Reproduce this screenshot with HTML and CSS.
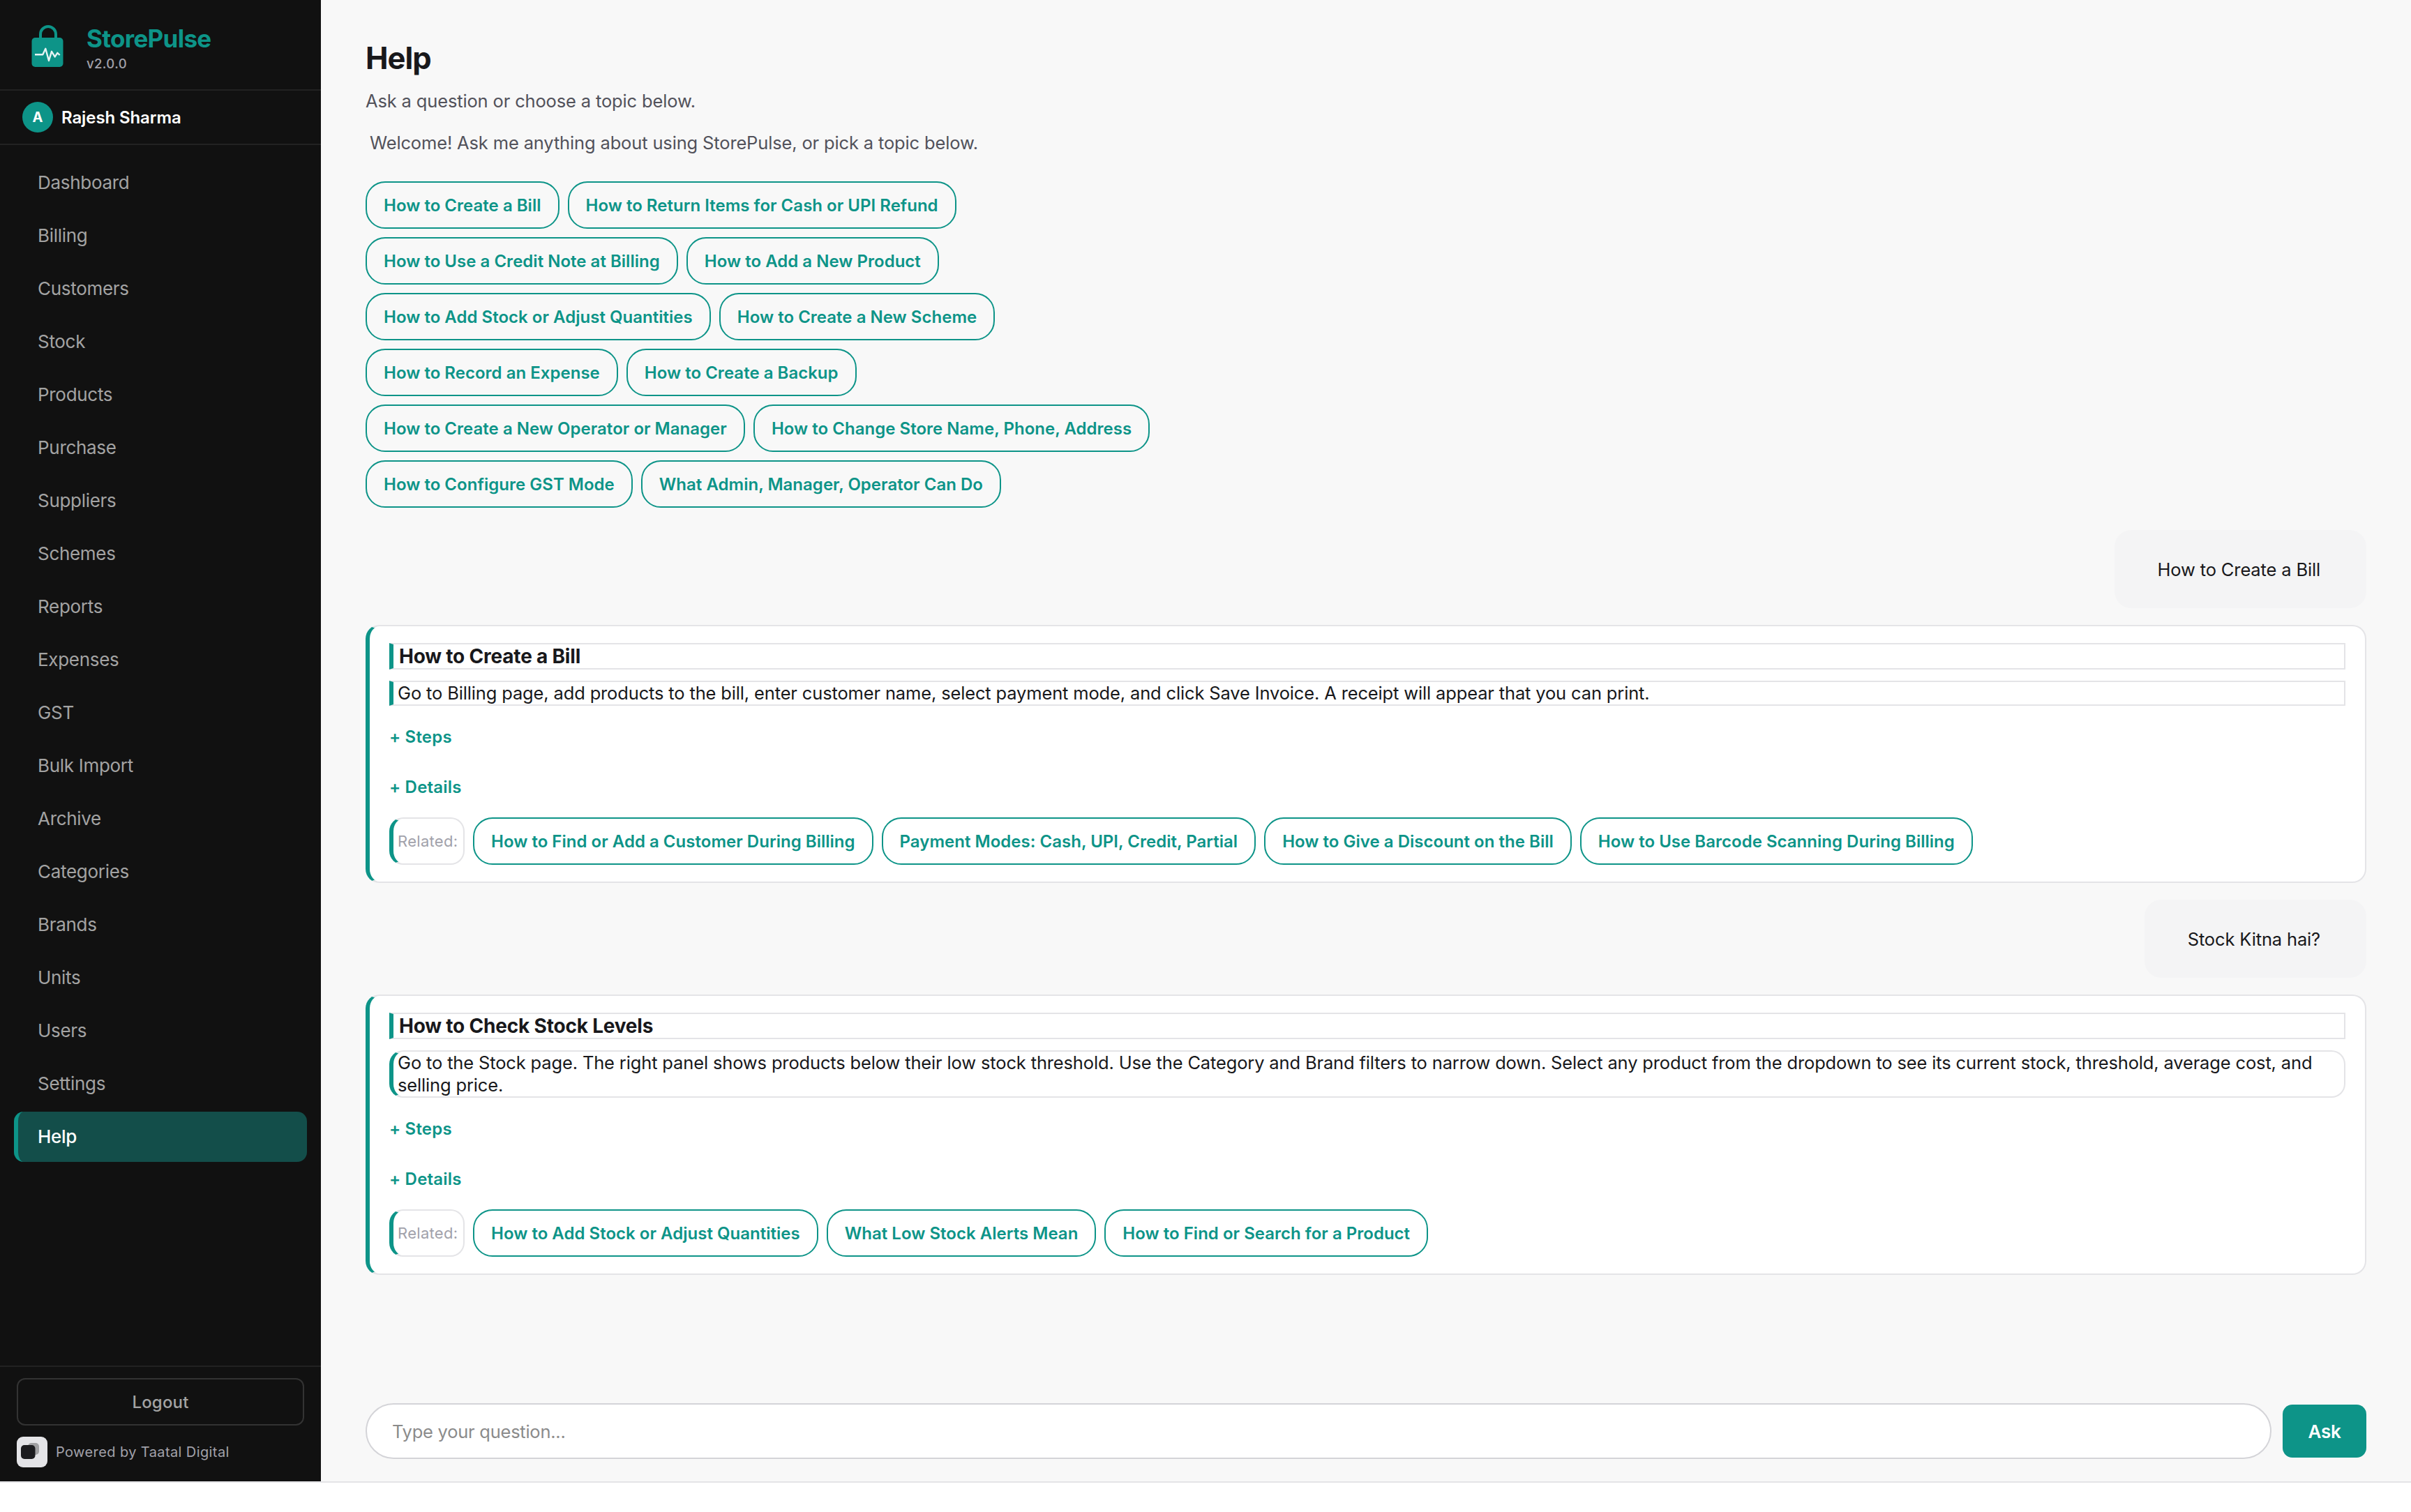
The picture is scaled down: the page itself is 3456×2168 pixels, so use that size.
FILE: index.html
```html
<!DOCTYPE html>
<html lang="en">
<head>
    <meta charset="UTF-8">
    <title>StorePulse - Help</title>
    <link rel="stylesheet" href="styles.css">
</head>
<body>
    <div class="app">
        <aside class="sidebar">
            <div class="brand">
                <svg class="brand-logo" viewBox="0 0 72 72" fill="none">
                    <path d="M26 28V21a11 11 0 0 1 22 0v7" stroke="#0d9488" stroke-width="4"/>
                    <rect x="13.5" y="26" width="45" height="42" rx="5" fill="#0d9488"/>
                    <path d="M18 50.3h11.3l4-8.5L38 59l4-13.2 4.7 7.6 3.6-5.6 3.4 3.2" stroke="#e6f4f3" stroke-width="2.4" stroke-linejoin="round"/>
                </svg>
                <div class="brand-text">
                    <div class="brand-name">StorePulse</div>
                    <div class="brand-version">v2.0.0</div>
                </div>
            </div>

            <div class="user">
                <div class="avatar">A</div>
                <div class="user-name">Rajesh Sharma</div>
            </div>

            <nav class="nav">
                <a class="nav-item">Dashboard</a>
                <a class="nav-item">Billing</a>
                <a class="nav-item">Customers</a>
                <a class="nav-item">Stock</a>
                <a class="nav-item">Products</a>
                <a class="nav-item">Purchase</a>
                <a class="nav-item">Suppliers</a>
                <a class="nav-item">Schemes</a>
                <a class="nav-item">Reports</a>
                <a class="nav-item">Expenses</a>
                <a class="nav-item">GST</a>
                <a class="nav-item">Bulk Import</a>
                <a class="nav-item">Archive</a>
                <a class="nav-item">Categories</a>
                <a class="nav-item">Brands</a>
                <a class="nav-item">Units</a>
                <a class="nav-item">Users</a>
                <a class="nav-item">Settings</a>
                <a class="nav-item active">Help</a>
            </nav>

            <div class="sidebar-footer">
                <button class="logout">Logout</button>
                <div class="powered">
                    <svg class="powered-logo" viewBox="0 0 44 44">
                        <rect width="44" height="44" rx="9" fill="#e4e4e7"/>
                        <rect x="16" y="9" width="16" height="17" rx="5" fill="#a0a0a2"/>
                        <rect x="6" y="12" width="20.5" height="20" rx="5" fill="#1c1c1f"/>
                    </svg>
                    <span>Powered by Taatal Digital</span>
                </div>
            </div>
        </aside>

        <main class="main">
            <h1>Help</h1>
            <p class="subtitle">Ask a question or choose a topic below.</p>
            <p class="welcome">Welcome! Ask me anything about using StorePulse, or pick a topic below.</p>

            <div class="topics">
                <button class="chip">How to Create a Bill</button>
                <button class="chip">How to Return Items for Cash or UPI Refund</button>
                <button class="chip">How to Use a Credit Note at Billing</button>
                <button class="chip">How to Add a New Product</button>
                <button class="chip">How to Add Stock or Adjust Quantities</button>
                <button class="chip">How to Create a New Scheme</button>
                <button class="chip">How to Record an Expense</button>
                <button class="chip">How to Create a Backup</button>
                <button class="chip">How to Create a New Operator or Manager</button>
                <button class="chip">How to Change Store Name, Phone, Address</button>
                <button class="chip">How to Configure GST Mode</button>
                <button class="chip">What Admin, Manager, Operator Can Do</button>
            </div>

            <div class="chat">
                <div class="question">How to Create a Bill</div>

                <div class="answer">
                    <div class="answer-title">How to Create a Bill</div>
                    <div class="answer-summary">Go to Billing page, add products to the bill, enter customer name, select payment mode, and click Save Invoice. A receipt will appear that you can print.</div>
                    <div class="toggles">
                        <button class="toggle">+ Steps</button>
                        <button class="toggle">+ Details</button>
                    </div>
                    <div class="related">
                        <span class="related-label">Related:</span>
                        <button class="chip">How to Find or Add a Customer During Billing</button>
                        <button class="chip">Payment Modes: Cash, UPI, Credit, Partial</button>
                        <button class="chip">How to Give a Discount on the Bill</button>
                        <button class="chip">How to Use Barcode Scanning During Billing</button>
                    </div>
                </div>

                <div class="question">Stock Kitna hai?</div>

                <div class="answer">
                    <div class="answer-title">How to Check Stock Levels</div>
                    <div class="answer-summary rounded">Go to the Stock page. The right panel shows products below their low stock threshold. Use the Category and Brand filters to narrow down. Select any product from the dropdown to see its current stock, threshold, average cost, and selling price.</div>
                    <div class="toggles">
                        <button class="toggle">+ Steps</button>
                        <button class="toggle">+ Details</button>
                    </div>
                    <div class="related">
                        <span class="related-label">Related:</span>
                        <button class="chip">How to Add Stock or Adjust Quantities</button>
                        <button class="chip">What Low Stock Alerts Mean</button>
                        <button class="chip">How to Find or Search for a Product</button>
                    </div>
                </div>
            </div>

            <div class="ask-bar">
                <input class="ask-input" type="text" placeholder="Type your question...">
                <button class="ask-btn">Ask</button>
            </div>
        </main>
    </div>
</body>
</html>
```
FILE: styles.css
```css
* {
    box-sizing: border-box;
}
body {
    margin: 0;
    background: #fff;
    color: #18181b;
    font-family: Inter, "Liberation Sans", sans-serif;
    font-size: 25.5px;
    line-height: 32px;
    letter-spacing: -0.15px;
}
h1, p {
    margin: 0;
}
button {
    font-family: inherit;
    margin: 0;
    background: none;
}
.app {
    display: flex;
    height: 2126px;
    border-bottom: 2px solid #e4e4e7;
    background: #f8f8f8;
}

/* Sidebar */
.sidebar {
    display: flex;
    flex-direction: column;
    width: 460px;
    flex-shrink: 0;
    background: #111;
    color: #a3a3a3;
}
.brand {
    display: flex;
    gap: 20px;
    height: 130px;
    padding: 28px 32px;
    border-bottom: 2px solid #222;
}
.brand-logo {
    width: 72px;
    height: 72px;
}
.brand-text {
    padding-top: 5px;
}
.brand-name {
    color: #0d9488;
    font-size: 35px;
    font-weight: 700;
    line-height: 44px;
    letter-spacing: -0.7px;
}
.brand-version {
    color: #a1a1aa;
    font-size: 18.5px;
    font-weight: 500;
    line-height: 29px;
    letter-spacing: 0.4px;
}
.user {
    display: flex;
    align-items: center;
    gap: 12px;
    height: 78px;
    padding: 0 32px;
    border-bottom: 2px solid #222;
}
.avatar {
    width: 44px;
    height: 44px;
    border-radius: 50%;
    background: #0d9488;
    color: #fff;
    font-size: 20px;
    font-weight: 700;
    line-height: 45px;
    text-align: center;
}
.user-name {
    padding-top: 1px;
    color: #fff;
    font-size: 24px;
    font-weight: 600;
    letter-spacing: -0.1px;
}
.nav {
    display: flex;
    flex-direction: column;
    gap: 4px;
    flex: 1;
    padding: 18px 20px;
}
.nav-item {
    height: 72px;
    padding-left: 28px;
    border-left: 6px solid transparent;
    border-radius: 14px;
    font-size: 26px;
    line-height: 72px;
    letter-spacing: -0.3px;
}
.nav-item.active {
    background: #134e4a;
    border-left-color: #0d9488;
    color: #fff;
    font-weight: 500;
}
.sidebar-footer {
    padding: 16px 24px 20px;
    border-top: 2px solid #222;
}
.logout {
    display: block;
    width: 412px;
    height: 68px;
    border: 2px solid #333;
    border-radius: 12px;
    color: #a3a3a3;
    font-size: 24px;
    font-weight: 500;
    letter-spacing: 0.2px;
}
.powered {
    display: flex;
    align-items: center;
    gap: 12px;
    margin-top: 16px;
    color: #a1a1aa;
    font-size: 20px;
    letter-spacing: 0.4px;
}
.powered-logo {
    width: 44px;
    height: 44px;
}

/* Help page */
.main {
    display: flex;
    flex-direction: column;
    flex: 1;
    padding: 57px 64px 32px;
}
h1 {
    font-size: 43.5px;
    font-weight: 700;
    line-height: 52px;
    letter-spacing: -1px;
}
.subtitle {
    margin-top: 20px;
    color: #52525b;
}
.welcome {
    margin-top: 28px;
    padding-left: 6px;
    color: #52525b;
}
.topics {
    display: flex;
    flex-wrap: wrap;
    gap: 12px;
    max-width: 1200px;
    margin-top: 39px;
}
.chip {
    height: 68px;
    padding: 0 24px;
    border: 2px solid #0d9488;
    border-radius: 28px;
    color: #0d9488;
    font-size: 24px;
    font-weight: 600;
    letter-spacing: 0.02px;
    white-space: nowrap;
}
.chat {
    display: flex;
    flex-direction: column;
    gap: 24px;
    flex: 1;
    margin-top: 32px;
}
.question {
    align-self: flex-end;
    padding: 41px 66px 39px 62px;
    border-radius: 24px;
    background: #f4f4f5;
}
.answer {
    padding: 24px 28px;
    border: 2px solid #e4e4e7;
    border-left: 6px solid #0d9488;
    border-radius: 20px;
    background: #fff;
}
.answer-title,
.answer-summary,
.related-label {
    padding: 0 6px;
    border: 2px solid #e4e4e7;
    border-left: 6px solid #0d9488;
}
.answer-title {
    padding: 1px 8px 0;
    font-size: 28px;
    font-weight: 700;
    line-height: 33px;
    letter-spacing: -0.2px;
}
.answer-summary {
    margin-top: 16px;
}
.answer-summary.rounded {
    border-radius: 20px;
}
.toggles {
    display: flex;
    flex-direction: column;
    align-items: flex-start;
    padding: 8px 0;
}
.toggle {
    height: 72px;
    padding: 0;
    border: none;
    color: #0d9488;
    font-size: 24px;
    font-weight: 600;
    letter-spacing: 0.2px;
}
.related {
    display: flex;
    gap: 12px;
}
.related-label {
    width: 108px;
    height: 68px;
    border-radius: 20px;
    color: #a1a1aa;
    font-size: 22px;
    line-height: 64px;
    letter-spacing: 0.3px;
}
.ask-bar {
    display: flex;
    align-items: center;
    gap: 16px;
}
.ask-input {
    flex: 1;
    height: 80px;
    padding: 0 36px;
    border: 2px solid #d4d4d8;
    border-radius: 40px;
    background: #fff;
    font-family: inherit;
    font-size: 25.5px;
    letter-spacing: -0.25px;
}
.ask-input::placeholder {
    color: #8b8b8b;
}
.ask-btn {
    width: 120px;
    height: 76px;
    border: none;
    border-radius: 14px;
    background: #0d9488;
    color: #fff;
    font-size: 26px;
    font-weight: 600;
    letter-spacing: -0.3px;
}
```
